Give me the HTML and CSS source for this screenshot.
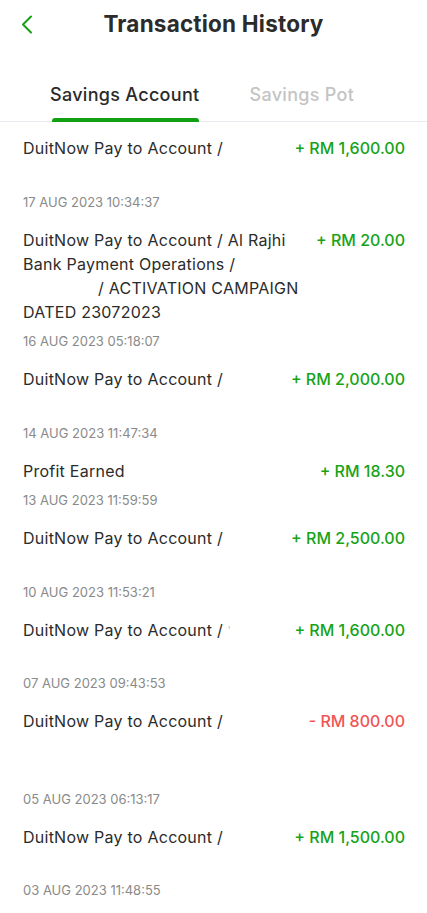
FILE: index.html
```html
<!DOCTYPE html>
<html lang="en">
<head>
<meta charset="utf-8">
<link rel="stylesheet" href="styles.css">
</head>
<body>
<div class="app">
  <header class="topbar">
    <button class="back" aria-label="Back">
      <svg width="12" height="19" viewBox="0 0 12 19"><path d="M10 1.5 L2 9.5 L10 17.5" fill="none" stroke="#16a016" stroke-width="2" stroke-linecap="round" stroke-linejoin="round"/></svg>
    </button>
    <h1 class="title">Transaction History</h1>
  </header>
  <nav class="tabs">
    <div class="tab active">Savings Account</div>
    <div class="tab">Savings Pot</div>
  </nav>
  <ul class="list">
    <li class="item">
      <div class="row"><div class="desc">DuitNow Pay to Account /<br>&nbsp;</div><div class="amt pos">+ RM 1,600.00</div></div>
      <div class="date">17 AUG 2023 10:34:37</div>
    </li>
    <li class="item">
      <div class="row"><div class="desc">DuitNow Pay to Account / Al Rajhi<br>Bank Payment Operations /<br><span class="gap"></span>/ ACTIVATION CAMPAIGN<br>DATED 23072023</div><div class="amt pos">+ RM 20.00</div></div>
      <div class="date">16 AUG 2023 05:18:07</div>
    </li>
    <li class="item">
      <div class="row"><div class="desc">DuitNow Pay to Account /<br>&nbsp;</div><div class="amt pos">+ RM 2,000.00</div></div>
      <div class="date">14 AUG 2023 11:47:34</div>
    </li>
    <li class="item">
      <div class="row"><div class="desc">Profit Earned</div><div class="amt pos">+ RM 18.30</div></div>
      <div class="date">13 AUG 2023 11:59:59</div>
    </li>
    <li class="item">
      <div class="row"><div class="desc">DuitNow Pay to Account /<br>&nbsp;</div><div class="amt pos">+ RM 2,500.00</div></div>
      <div class="date">10 AUG 2023 11:53:21</div>
    </li>
    <li class="item">
      <div class="row"><div class="desc">DuitNow Pay to Account / <span class="tick">'</span><br>&nbsp;</div><div class="amt pos">+ RM 1,600.00</div></div>
      <div class="date">07 AUG 2023 09:43:53</div>
    </li>
    <li class="item">
      <div class="row"><div class="desc">DuitNow Pay to Account /<br>&nbsp;<br>&nbsp;</div><div class="amt neg">- RM 800.00</div></div>
      <div class="date">05 AUG 2023 06:13:17</div>
    </li>
    <li class="item">
      <div class="row"><div class="desc">DuitNow Pay to Account /<br>&nbsp;</div><div class="amt pos">+ RM 1,500.00</div></div>
      <div class="date">03 AUG 2023 11:48:55</div>
    </li>
  </ul>
</div>
</body>
</html>
```
FILE: styles.css
```css
* { box-sizing: border-box; }
html, body { margin: 0; padding: 0; background: #fff; }
body {
  font-family: "Inter", "Open Sans", sans-serif;
  color: #2a2a2a;
  width: 427px;
  height: 913px;
  overflow: hidden;
}
.app { display: flex; flex-direction: column; }
.topbar {
  position: relative;
  height: 48px;
  display: flex;
  align-items: center;
  justify-content: center;
}
.back {
  position: absolute;
  left: 20px;
  top: 14px;
  border: 0;
  background: none;
  padding: 0;
  width: 14px;
  height: 20px;
  display: flex;
  align-items: center;
  justify-content: center;
}
.title {
  margin: 0;
  font-size: 22.5px;
  font-weight: 650;
  color: #2b2b2b;
  letter-spacing: 0.2px;
  line-height: 48px;
}
.tabs {
  margin-top: 27px;
  display: flex;
  border-bottom: 1.5px solid #e8e8ee;
  padding-left: 50px;
  gap: 50px;
}
.tab {
  font-size: 18px;
  font-weight: 450;
  letter-spacing: 0.3px;
  color: #c4c4c4;
  height: 46px;
  line-height: 40px;
  position: relative;
}
.tab.active { color: #2a2a2a; }
.tab.active::after {
  content: "";
  position: absolute;
  left: 2px;
  right: 0;
  bottom: -1px;
  height: 4px;
  background: #11a011;
  border-radius: 3px 3px 0 0;
}
.list { list-style: none; margin: 0; padding: 14px 22px 0 23px; }
.item { margin-bottom: 17px; }
.row { display: flex; justify-content: space-between; align-items: flex-start; }
.desc {
  font-size: 16px;
  font-weight: 420;
  letter-spacing: 0.25px;
  line-height: 24px;
  color: #2b2b2b;
  white-space: nowrap;
}
.gap { display: inline-block; width: 75px; }
.tick { color: #bbb; font-size: 10px; vertical-align: top; }
.amt {
  font-size: 16px;
  font-weight: 500;
  line-height: 24px;
}
.pos { color: #17a317; }
.neg { color: #f05454; }
.date {
  margin-top: 8.5px;
  font-size: 13px;
  font-weight: 400;
  color: #8a8a8a;
  line-height: 18px;
}
```
